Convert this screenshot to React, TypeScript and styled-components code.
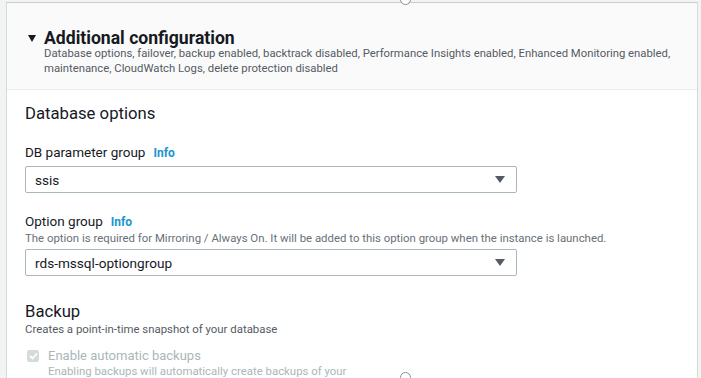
import React from "react";
import styled, { createGlobalStyle } from "styled-components";

const Global = createGlobalStyle`
  html, body { margin: 0; padding: 0; }
  body {
    background: #f2f3f3;
    font-family: Roboto, "Noto Sans", sans-serif;
    color: #16191f;
    width: 701px;
    height: 378px;
    overflow: hidden;
  }
`;

const Frame = styled.div`
  position: relative;
  width: 701px;
  height: 378px;
  box-sizing: border-box;
  padding: 2px 3px 0 6px;
  overflow: hidden;
`;

const Panel = styled.div`
  height: 100%;
  border-left: 1px solid #d5dbdb;
  border-right: 1px solid #d5dbdb;
  border-top: 1px solid #c8cccc;
  background: #ffffff;
  box-sizing: border-box;
`;

const Header = styled.div`
  background: #fafafa;
  border-bottom: 1px solid #eaeded;
  padding: 27px 6px 13px 21px;
`;

const TitleRow = styled.div`
  display: flex;
  align-items: center;
  gap: 8px;
`;

const Caret = styled.svg`
  width: 8px;
  height: 7px;
  flex: none;
`;

const Title = styled.h2`
  margin: 0;
  font-size: 17.6px;
  font-weight: 700;
  line-height: 16px;
  color: #16191f;
`;

const Summary = styled.p`
  margin: 0 0 0 16px;
  font-size: 11.3px;
  line-height: 15px;
  color: #545b64;
  white-space: nowrap;
`;

const Body = styled.div`
  padding: 12px 18px 0 18px;
  display: flex;
  flex-direction: column;
`;

const SectionTitle = styled.h3`
  margin: 0;
  font-size: 16.7px;
  font-weight: 400;
  line-height: 24px;
  color: #16191f;
`;

const Field = styled.div<{ $top: number }>`
  margin-top: ${(p) => p.$top}px;
  display: flex;
  flex-direction: column;
`;

const Label = styled.div`
  display: flex;
  align-items: baseline;
  gap: 8px;
  font-size: 13.5px;
  line-height: 20px;
  color: #16191f;
`;

const Info = styled.span`
  font-size: 12px;
  font-weight: 700;
  color: #1a94d0;
`;

const Hint = styled.div`
  font-size: 11.4px;
  line-height: 13px;
  color: #687078;
`;

const Select = styled.div<{ $top: number }>`
  margin-top: ${(p) => p.$top}px;
  width: 492px;
  height: 27px;
  box-sizing: border-box;
  border: 1px solid #aab7b8;
  border-radius: 2px;
  display: flex;
  align-items: center;
  justify-content: space-between;
  padding: 0 11px 0 9px;
  font-size: 13.6px;
  color: #16191f;
`;

const Arrow = styled.svg`
  width: 10px;
  height: 7px;
`;

const Section = styled.div`
  margin-top: 24px;
  display: flex;
  flex-direction: column;
`;

const SectionDesc = styled.div`
  font-size: 11.4px;
  line-height: 16px;
  color: #545b64;
  margin-top: -3px;
`;

const CheckRow = styled.div`
  margin-top: 10px;
  display: flex;
  gap: 9px;
`;

const Box = styled.div`
  width: 12px;
  height: 12px;
  margin-top: 3px;
  margin-left: 2px;
  border-radius: 2px;
  background: #d5dbdb;
  display: flex;
  align-items: center;
  justify-content: center;
  flex: none;
`;

const CheckText = styled.div`
  display: flex;
  flex-direction: column;
`;

const CheckLabel = styled.div`
  font-size: 13px;
  line-height: 17px;
  color: #aab7b8;
`;

const CheckHint = styled.div`
  font-size: 11.4px;
  line-height: 14px;
  color: #aab7b8;
`;

const Handle = styled.div<{ $top: number }>`
  position: absolute;
  left: 400px;
  top: ${(p) => p.$top}px;
  width: 9px;
  height: 9px;
  border: 1.5px solid #8a8f93;
  border-radius: 50%;
  background: #ffffff;
`;

const DownArrow = () => (
  <Arrow viewBox="0 0 10 7">
    <path d="M0 0 H10 L5 7 Z" fill="#545b64" />
  </Arrow>
);

export default function App() {
  return (
    <>
      <Global />
      <Frame>
        <Panel>
          <Header>
            <TitleRow>
              <Caret viewBox="0 0 8 7">
                <path d="M0 0 H8 L4 7 Z" fill="#16191f" />
              </Caret>
              <Title>Additional configuration</Title>
            </TitleRow>
            <Summary>
              Database options, failover, backup enabled, backtrack disabled, Performance Insights enabled, Enhanced
              Monitoring enabled,
              <br />
              maintenance, CloudWatch Logs, delete protection disabled
            </Summary>
          </Header>
          <Body>
            <SectionTitle>Database options</SectionTitle>
            <Field $top={16}>
              <Label>
                DB parameter group <Info>Info</Info>
              </Label>
              <Select $top={3}>
                ssis
                <DownArrow />
              </Select>
            </Field>
            <Field $top={18}>
              <Label>
                Option group <Info>Info</Info>
              </Label>
              <Hint>
                The option is required for Mirroring / Always On. It will be added to this option group when the instance is
                launched.
              </Hint>
              <Select $top={4}>
                rds-mssql-optiongroup
                <DownArrow />
              </Select>
            </Field>
            <Section>
              <SectionTitle>Backup</SectionTitle>
              <SectionDesc>Creates a point-in-time snapshot of your database</SectionDesc>
              <CheckRow>
                <Box>
                  <svg width="9" height="8" viewBox="0 0 9 8">
                    <path d="M1 4 L3.5 6.5 L8 1.5" stroke="#ffffff" strokeWidth="1.8" fill="none" />
                  </svg>
                </Box>
                <CheckText>
                  <CheckLabel>Enable automatic backups</CheckLabel>
                  <CheckHint>Enabling backups will automatically create backups of your</CheckHint>
                </CheckText>
              </CheckRow>
            </Section>
          </Body>
        </Panel>
        <Handle $top={-6} />
        <Handle $top={372} />
      </Frame>
    </>
  );
}
